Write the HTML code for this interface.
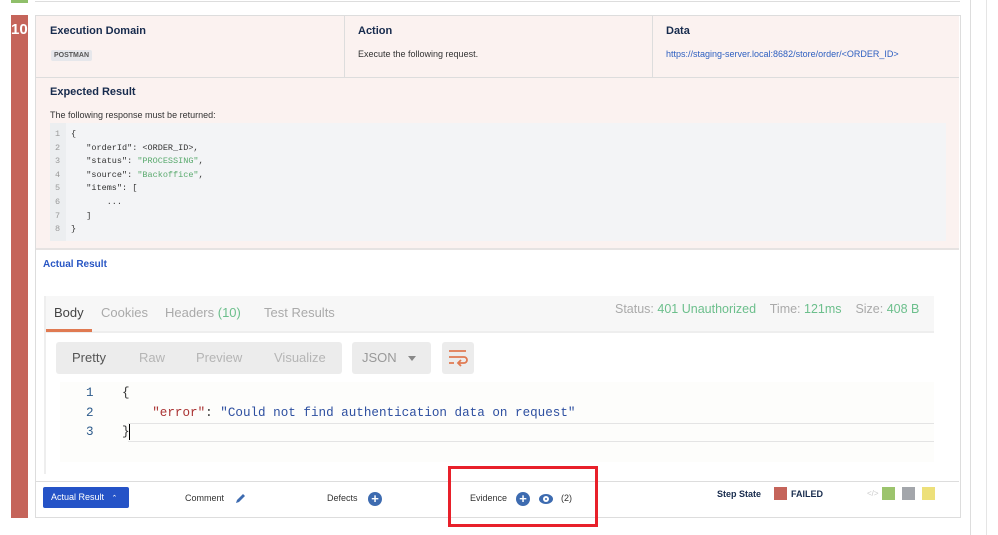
<!DOCTYPE html>
<html><head><style>
body{margin:0;width:998px;height:535px;background:#fff;font-family:"Liberation Sans",sans-serif;position:relative;overflow:hidden}
.a{position:absolute}
.h{font-weight:bold;font-size:11px;color:#172b4d}
.t{font-size:9px;color:#333}
.mono{font-family:"Liberation Mono",monospace}
</style></head><body>
<div class="a" style="left:11px;top:0;width:17px;height:3px;background:#8fbf6a"></div>
<div class="a" style="left:35px;top:0;width:925px;height:1px;border-bottom:1px solid #ddd"></div>
<div class="a" style="left:970px;top:0;width:1px;height:535px;background:#ddd"></div>
<div class="a" style="left:986px;top:0;width:1px;height:535px;background:#e5e5e5"></div>
<div class="a" style="left:11px;top:15px;width:17px;height:503px;background:#c5645a"></div>
<div class="a" style="left:11px;top:21px;color:#fff;font-weight:bold;font-size:15px">10</div>
<div class="a" style="left:35px;top:15px;width:924px;height:501px;border:1px solid #ddd;background:#fff"></div>
<div class="a" style="left:36px;top:16px;width:923px;height:232px;background:#fbf2f0;border-bottom:2px solid #e6e3e2"></div>
<div class="a" style="left:36px;top:77px;width:923px;height:1px;background:#ddd"></div>
<div class="a" style="left:344px;top:16px;width:1px;height:61px;background:#ddd"></div>
<div class="a" style="left:652px;top:16px;width:1px;height:61px;background:#ddd"></div>
<div class="a h" style="left:50px;top:25px">Execution Domain</div>
<div class="a" style="left:51px;top:50px;background:#e6e7eb;color:#555;font-size:7px;font-weight:bold;padding:2px 3px;border-radius:2px">POSTMAN</div>
<div class="a h" style="left:358px;top:25px">Action</div>
<div class="a t" style="left:358px;top:49px">Execute the following request.</div>
<div class="a h" style="left:666px;top:25px">Data</div>
<div class="a" style="left:666px;top:49px;font-size:9px;color:#2d5fc0">https://staging-server.local:8682/store/order/&lt;ORDER_ID&gt;</div>
<div class="a h" style="left:50px;top:86px">Expected Result</div>
<div class="a t" style="left:50px;top:110px">The following response must be returned:</div>
<div class="a" style="left:50px;top:123px;width:896px;height:118px;background:#f3f4f6"></div>
<div class="a" style="left:50px;top:123px;width:16px;height:118px;background:#eceef0"></div>
<div class="a mono" style="left:55px;top:128px;font-size:8.5px;line-height:13.6px;color:#999">1<br>2<br>3<br>4<br>5<br>6<br>7<br>8</div>
<div class="a mono" style="left:71px;top:128px;font-size:8.5px;line-height:13.6px;color:#333;white-space:pre">{
   "orderId": &lt;ORDER_ID&gt;,
   "status": <span style="color:#5aaa6e">"PROCESSING"</span>,
   "source": <span style="color:#5aaa6e">"Backoffice"</span>,
   "items": [
       ...
   ]
}</div>
<div class="a" style="left:43px;top:259px;font-size:10px;font-weight:bold;color:#2856c4">Actual Result</div>
<div class="a" style="left:44px;top:296px;width:890px;height:35px;background:#f7f7f7;border-bottom:2px solid #eee"></div>
<div class="a" style="left:44px;top:296px;width:2px;height:178px;background:#eee"></div>
<div class="a" style="left:54px;top:305px;font-size:13px;color:#444">Body</div>
<div class="a" style="left:46px;top:329px;width:46px;height:3px;background:#e07a52"></div>
<div class="a" style="left:101px;top:305px;font-size:13px;color:#aaa">Cookies</div>
<div class="a" style="left:165px;top:305px;font-size:13px;color:#aaa">Headers <span style="color:#6cbf8c">(10)</span></div>
<div class="a" style="left:264px;top:305px;font-size:13px;color:#aaa">Test Results</div>
<div class="a" style="left:615px;top:302px;font-size:12.5px;color:#aaa;white-space:nowrap">Status: <span style="color:#6cbf8c">401 Unauthorized</span>&nbsp;&nbsp;&nbsp; Time: <span style="color:#6cbf8c">121ms</span>&nbsp;&nbsp;&nbsp; Size: <span style="color:#6cbf8c">408 B</span></div>
<div class="a" style="left:56px;top:342px;width:286px;height:32px;background:#ececec;border-radius:3px"></div>
<div class="a" style="left:72px;top:350px;font-size:13px;color:#555">Pretty</div>
<div class="a" style="left:139px;top:350px;font-size:13px;color:#b5b5b5">Raw</div>
<div class="a" style="left:196px;top:350px;font-size:13px;color:#b5b5b5">Preview</div>
<div class="a" style="left:274px;top:350px;font-size:13px;color:#b5b5b5">Visualize</div>
<div class="a" style="left:352px;top:342px;width:79px;height:32px;background:#ececec;border-radius:3px"></div>
<div class="a" style="left:362px;top:350px;font-size:13px;color:#999">JSON</div>
<div class="a" style="left:408px;top:356px;border-left:4px solid transparent;border-right:4px solid transparent;border-top:5px solid #888"></div>
<div class="a" style="left:442px;top:342px;width:32px;height:32px;background:#ececec;border-radius:3px"></div>
<svg class="a" style="left:447px;top:348px" width="22" height="20"><path d="M2 3h17M2 9h15a3 3 0 0 1 0 6h-6M14 12l-3 3 3 3M2 15h5" stroke="#e07a52" stroke-width="1.8" fill="none"/></svg>
<div class="a" style="left:60px;top:382px;width:874px;height:80px;background:#fdfdfb"></div>
<div class="a" style="left:128px;top:423px;width:806px;height:1px;background:#e4e4e4"></div>
<div class="a" style="left:128px;top:441px;width:806px;height:1px;background:#e4e4e4"></div>
<div class="a mono" style="left:86px;top:384px;font-size:12.6px;line-height:19.5px;color:#2d5b8c">1<br>2<br>3</div>
<div class="a mono" style="left:122px;top:384px;font-size:12.6px;line-height:19.5px;color:#333;white-space:pre">{
    <span style="color:#a33">"error"</span>: <span style="color:#2d4fa0">"Could not find authentication data on request"</span>
}</div>
<div class="a" style="left:129px;top:424px;width:1px;height:16px;background:#000"></div>
<div class="a" style="left:36px;top:481px;width:923px;height:1px;background:#ddd"></div>
<div class="a" style="left:43px;top:487px;width:86px;height:21px;background:#2553c7;border-radius:2px;color:#fff;font-size:9px;line-height:21px;text-indent:8px">Actual Result&nbsp;&nbsp;&nbsp;<span style="font-size:7px">⌃</span></div>
<div class="a t" style="left:185px;top:493px">Comment</div>
<svg class="a" style="left:234px;top:492px" width="13" height="13"><path d="M2 11l1-3 6-6 2 2-6 6z" fill="#3d6bb0"/></svg>
<div class="a t" style="left:327px;top:493px">Defects</div>
<div class="a" style="left:368px;top:492px;width:14px;height:14px;border-radius:50%;background:#3d6bb0;color:#fff;font-size:13px;line-height:14px;text-align:center;font-weight:bold">+</div>
<div class="a t" style="left:470px;top:493px">Evidence</div>
<div class="a" style="left:516px;top:492px;width:14px;height:14px;border-radius:50%;background:#3d6bb0;color:#fff;font-size:13px;line-height:14px;text-align:center;font-weight:bold">+</div>
<div class="a" style="left:539px;top:494px;width:14px;height:10px;border-radius:50%;background:#3d6bb0"></div>
<div class="a" style="left:543px;top:496px;width:6px;height:6px;border-radius:50%;background:#fff"></div>
<div class="a" style="left:545px;top:498px;width:2px;height:2px;border-radius:50%;background:#3d6bb0"></div>
<div class="a t" style="left:561px;top:493px">(2)</div>
<div class="a" style="left:448px;top:466px;width:144px;height:55px;border:3px solid #e8202a"></div>
<div class="a" style="left:717px;top:489px;font-size:9px;font-weight:bold;color:#172b4d">Step State</div>
<div class="a" style="left:774px;top:487px;width:13px;height:13px;background:#c5645a"></div>
<div class="a" style="left:791px;top:489px;font-size:9px;font-weight:bold;color:#172b4d">FAILED</div>
<div class="a" style="left:867px;top:489px;font-size:8px;color:#ccc">&lt;/&gt;</div>
<div class="a" style="left:882px;top:487px;width:13px;height:13px;background:#9cc46d"></div>
<div class="a" style="left:902px;top:487px;width:13px;height:13px;background:#a3a6ab"></div>
<div class="a" style="left:922px;top:487px;width:13px;height:13px;background:#ede07a"></div>
</body></html>
